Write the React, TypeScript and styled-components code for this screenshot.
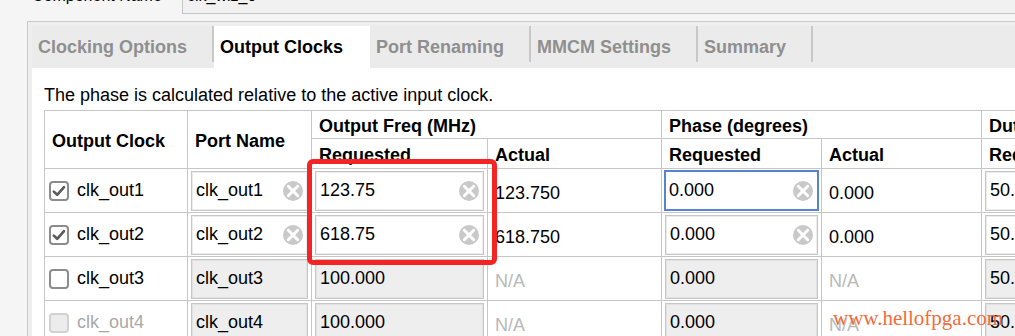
import React from "react";
import styled, { createGlobalStyle, css } from "styled-components";

const GlobalStyle = createGlobalStyle`
  html, body {
    margin: 0;
    padding: 0;
    width: 1015px;
    height: 336px;
    overflow: hidden;
    background: #f5f5f5;
    font-family: "Liberation Sans", Arial, sans-serif;
    color: #000;
  }
  * { box-sizing: border-box; }
`;

const Page = styled.div`
  position: relative;
  width: 1015px;
  height: 336px;
  overflow: hidden;
`;

const TopBar = styled.div`
  display: flex;
  align-items: flex-end;
  height: 31px;
  margin-top: -17px;
  padding-left: 32px;
`;

const TopLabel = styled.span`
  width: 150px;
  font-size: 16px;
  line-height: 20px;
  margin-bottom: 8px;
  white-space: nowrap;
`;

const NameField = styled.div`
  flex: 1;
  height: 31px;
  display: flex;
  align-items: flex-end;
  padding: 0 0 7px 4px;
  border: 1px solid #c6c6c6;
  border-right: none;
  background: #f1f1f1;
  font-size: 16px;
  line-height: 20px;
`;

const Panel = styled.div`
  margin: 7px 0 0 27px;
  border-top: 1px solid #cacaca;
  border-left: 1px solid #cacaca;
  background: #eeeeee;
  padding: 4px 0 0 4px;
  height: 400px;
`;

const TabBar = styled.div`
  display: flex;
  height: 42px;
  background: #ebebeb;
`;

const Tab = styled.div<{ $active?: boolean }>`
  position: relative;
  display: flex;
  align-items: center;
  padding: 1px 27px 0 6px;
  font-size: 18px;
  font-weight: bold;
  white-space: nowrap;
  color: ${(p) => (p.$active ? "#000" : "#8f8f8f")};
  background: ${(p) => (p.$active ? "#fff" : "#ebebeb")};
  ${(p) =>
    !p.$active &&
    css`
      &::after {
        content: "";
        position: absolute;
        right: 0;
        top: 0;
        width: 2px;
        height: 36px;
        background: #c8c8c8;
      }
    `}
`;

const Content = styled.div`
  background: #fff;
  padding: 16px 0 0 12px;
  height: 400px;
`;

const Intro = styled.p`
  margin: 0 0 4px;
  font-size: 18px;
  line-height: 22px;
  white-space: nowrap;
`;

const Table = styled.table`
  border-collapse: collapse;
  table-layout: fixed;
  width: 1097px;
  font-size: 18px;
`;

const HeadRow = styled.tr<{ $h: number }>`
  height: ${(p) => p.$h}px;
`;

const Th = styled.th`
  border: 1px solid #c6c6c6;
  text-align: left;
  font-weight: bold;
  padding: 4px 6px 0 7px;
  white-space: nowrap;
  overflow: hidden;
  vertical-align: middle;
`;

const BodyRow = styled.tr`
  height: 44px;
`;

const Td = styled.td`
  border: 1px solid #c6c6c6;
  padding: 1px 3px 1px 3px;
  white-space: nowrap;
  overflow: hidden;
  vertical-align: middle;
`;

const ValueTd = styled(Td)<{ $muted?: boolean }>`
  padding: 5px 6px 0 7px;
  color: ${(p) => (p.$muted ? "#b8b8b8" : "#000")};
`;

const ClockCell = styled.div`
  display: flex;
  align-items: center;
  gap: 8px;
  padding-left: 1px;
`;

const Box = styled.span<{ $disabled?: boolean }>`
  width: 20px;
  height: 20px;
  flex: none;
  display: flex;
  align-items: center;
  justify-content: center;
  border: 2px solid ${(p) => (p.$disabled ? "#d2d2d2" : "#8c8c8c")};
  border-radius: 4px;
  background: ${(p) => (p.$disabled ? "#ececec" : "#fff")};
`;

const ClockLabel = styled.span<{ $disabled?: boolean }>`
  color: ${(p) => (p.$disabled ? "#a9a9a9" : "#000")};
`;

const Field = styled.div<{ $disabled?: boolean; $focused?: boolean }>`
  display: flex;
  align-items: center;
  justify-content: space-between;
  height: 40px;
  padding: 0 4px 0 4px;
  background: ${(p) => (p.$disabled ? "#eeeeee" : "#fff")};
  border: 1px solid #c6c6c6;
  box-shadow: inset 0 0 0 1px ${(p) => (p.$disabled ? "#e2e2e2" : "#ececec")};
  white-space: nowrap;
  overflow: hidden;
  ${(p) =>
    p.$focused &&
    css`
      border: 2px solid #5683d2;
      box-shadow: none;
      margin: 0 -1px 0 -1px;
      height: 41px;
      padding: 0 4px 0 3px;
    `}
`;

const FieldText = styled.span`
  padding-bottom: 1px;
`;

const Annotation = styled.div`
  position: absolute;
  left: 307px;
  top: 159px;
  width: 190px;
  height: 106px;
  border: 5px solid #f42424;
  border-radius: 6px;
  pointer-events: none;
`;

const Watermark = styled.div`
  position: absolute;
  left: 833px;
  top: 308px;
  font-family: "Liberation Serif", "Times New Roman", serif;
  font-size: 21px;
  line-height: 21px;
  color: #f26c3b;
  white-space: nowrap;
`;

const ClearIcon = () => (
  <svg width="20" height="20" viewBox="0 0 20 20" style={{ flex: "none" }}>
    <circle cx="10" cy="10" r="10" fill="#c9c9c9" />
    <path d="M5.3 5.3 L14.7 14.7 M14.7 5.3 L5.3 14.7" stroke="#fff" strokeWidth="3" strokeLinecap="round" />
  </svg>
);

const Check = ({ checked, disabled }: { checked: boolean; disabled?: boolean }) => (
  <Box $disabled={disabled}>
    {checked && (
      <svg width="16" height="16" viewBox="0 0 16 16">
        <polyline points="2.8,8.6 6.2,11.8 13,4.2" fill="none" stroke="#5a5a5a" strokeWidth="2.6" strokeLinecap="round" strokeLinejoin="round" />
      </svg>
    )}
  </Box>
);

type Row = {
  clock: string;
  checked: boolean;
  clockDisabled?: boolean;
  editable: boolean;
  freq: string;
  freqAct: string;
  phase: string;
  phaseAct: string;
  duty: string;
  focusPhase?: boolean;
};

const rows: Row[] = [
  { clock: "clk_out1", checked: true, editable: true, freq: "123.75", freqAct: "123.750", phase: "0.000", phaseAct: "0.000", duty: "50.000", focusPhase: true },
  { clock: "clk_out2", checked: true, editable: true, freq: "618.75", freqAct: "618.750", phase: "0.000", phaseAct: "0.000", duty: "50.000" },
  { clock: "clk_out3", checked: false, editable: false, freq: "100.000", freqAct: "N/A", phase: "0.000", phaseAct: "N/A", duty: "50.000" },
  { clock: "clk_out4", checked: false, clockDisabled: true, editable: false, freq: "100.000", freqAct: "N/A", phase: "0.000", phaseAct: "N/A", duty: "50.000" },
];

const TextField = ({ value, editable, focused, clear = true }: { value: string; editable: boolean; focused?: boolean; clear?: boolean }) => (
  <Field $disabled={!editable} $focused={focused}>
    <FieldText>{value}</FieldText>
    {editable && clear && <ClearIcon />}
  </Field>
);

const tabs = ["Clocking Options", "Output Clocks", "Port Renaming", "MMCM Settings", "Summary"];

export default function App() {
  return (
    <>
      <GlobalStyle />
      <Page>
        <TopBar>
          <TopLabel>Component Name</TopLabel>
          <NameField>clk_wiz_0</NameField>
        </TopBar>
        <Panel>
          <TabBar>
            {tabs.map((t) => (
              <Tab key={t} $active={t === "Output Clocks"}>
                {t}
              </Tab>
            ))}
          </TabBar>
          <Content>
            <Intro>The phase is calculated relative to the active input clock.</Intro>
            <Table>
              <colgroup>
                <col style={{ width: 143 }} />
                <col style={{ width: 124 }} />
                <col style={{ width: 176 }} />
                <col style={{ width: 174 }} />
                <col style={{ width: 160 }} />
                <col style={{ width: 160 }} />
                <col style={{ width: 160 }} />
              </colgroup>
              <thead>
                <HeadRow $h={28}>
                  <Th rowSpan={2}>Output Clock</Th>
                  <Th rowSpan={2}>Port Name</Th>
                  <Th colSpan={2}>Output Freq (MHz)</Th>
                  <Th colSpan={2}>Phase (degrees)</Th>
                  <Th>Duty Cycle (%)</Th>
                </HeadRow>
                <HeadRow $h={30}>
                  <Th>Requested</Th>
                  <Th>Actual</Th>
                  <Th>Requested</Th>
                  <Th>Actual</Th>
                  <Th>Requested</Th>
                </HeadRow>
              </thead>
              <tbody>
                {rows.map((r) => (
                  <BodyRow key={r.clock}>
                    <Td>
                      <ClockCell>
                        <Check checked={r.checked} disabled={r.clockDisabled} />
                        <ClockLabel $disabled={r.clockDisabled}>{r.clock}</ClockLabel>
                      </ClockCell>
                    </Td>
                    <Td>
                      <TextField value={r.clock} editable={r.editable} />
                    </Td>
                    <Td>
                      <TextField value={r.freq} editable={r.editable} />
                    </Td>
                    <ValueTd $muted={r.freqAct === "N/A"}>{r.freqAct}</ValueTd>
                    <Td>
                      <TextField value={r.phase} editable={r.editable} focused={r.focusPhase} />
                    </Td>
                    <ValueTd $muted={r.phaseAct === "N/A"}>{r.phaseAct}</ValueTd>
                    <Td>
                      <TextField value={r.duty} editable={r.editable} />
                    </Td>
                  </BodyRow>
                ))}
              </tbody>
            </Table>
          </Content>
        </Panel>
        <Annotation />
        <Watermark>www.hellofpga.com</Watermark>
      </Page>
    </>
  );
}
